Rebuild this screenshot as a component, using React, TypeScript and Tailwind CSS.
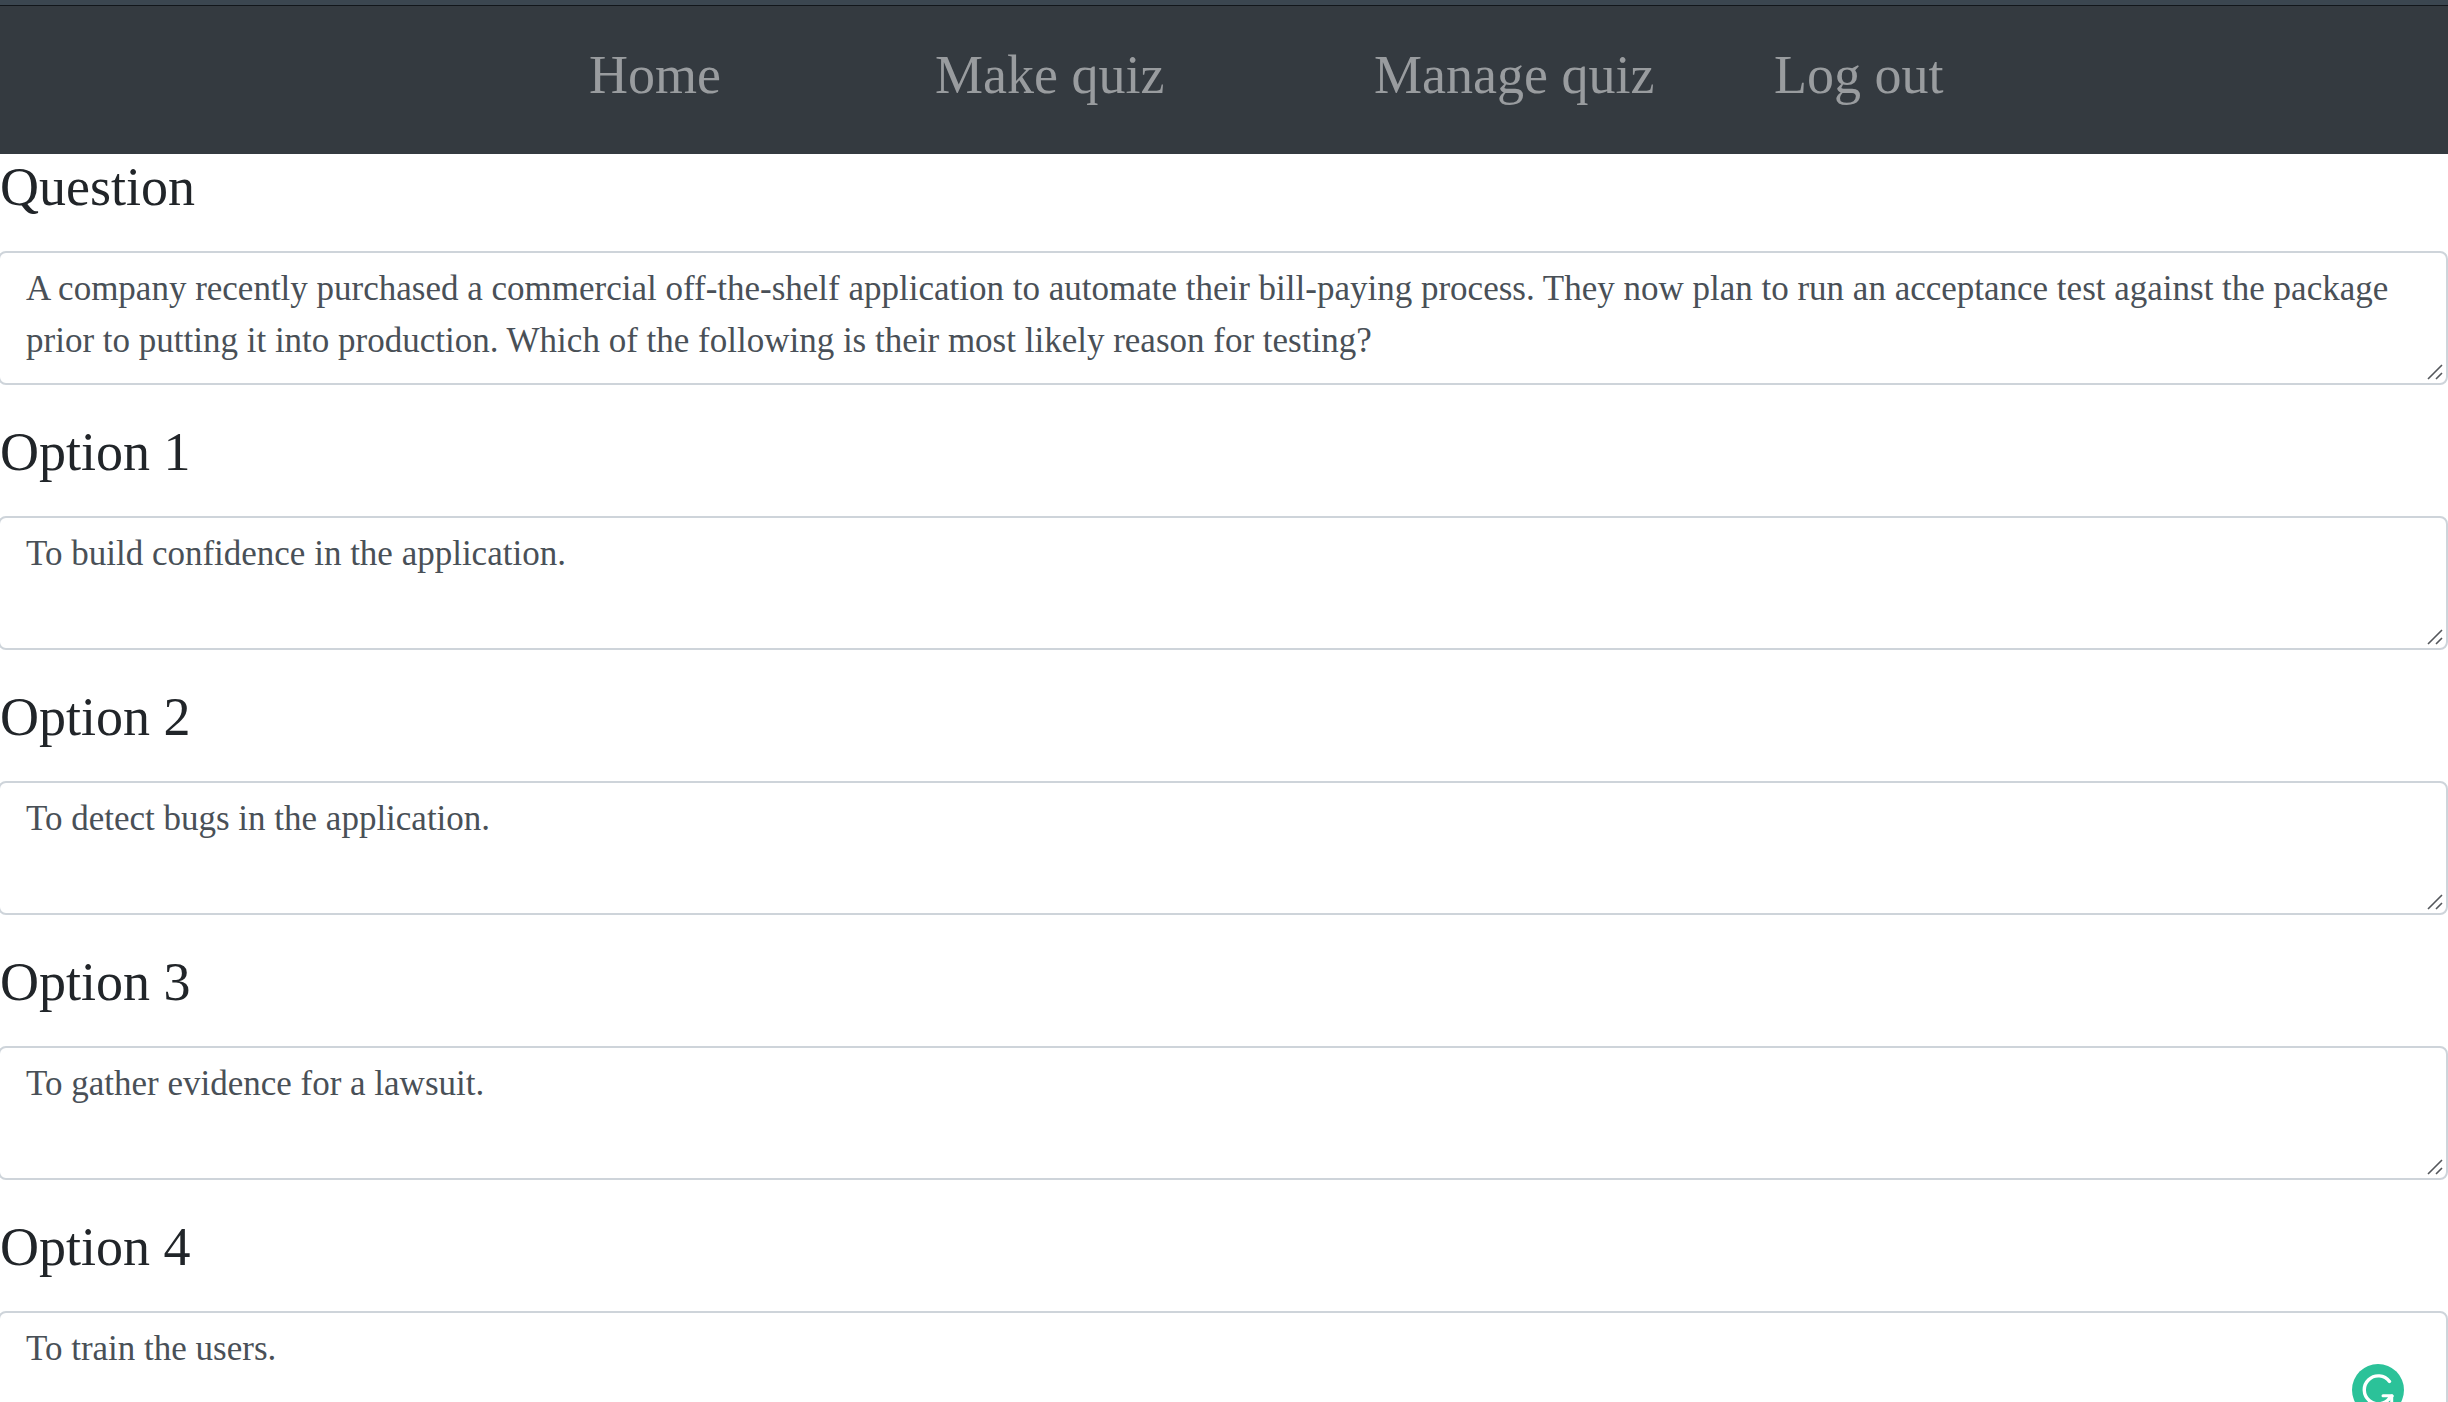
import { useState } from "react";

type Field = { id: string; label: string; value: string };

const links = ["Home", "Make quiz", "Manage quiz", "Log out"];

const fields: Field[] = [
  {
    id: "question",
    label: "Question",
    value:
      "A company recently purchased a commercial off-the-shelf application to automate their bill-paying process. They now plan to run an acceptance test against the package prior to putting it into production. Which of the following is their most likely reason for testing?",
  },
  { id: "option-1", label: "Option 1", value: "To build confidence in the application." },
  { id: "option-2", label: "Option 2", value: "To detect bugs in the application." },
  { id: "option-3", label: "Option 3", value: "To gather evidence for a lawsuit." },
  { id: "option-4", label: "Option 4", value: "To train the users." },
];

function ResizeGrip() {
  return (
    <svg
      viewBox="0 0 16 16"
      className="pointer-events-none absolute right-[5px] bottom-[5px] size-4"
      stroke="#54575b"
      strokeWidth="1.6"
      aria-hidden="true"
    >
      <path d="M1 15 15 1M9 15l6-6" />
    </svg>
  );
}

function AssistantButton() {
  return (
    <button
      type="button"
      aria-label="Writing assistant"
      className="absolute top-[53px] right-11 size-[52px] rounded-full bg-[#2bc299]"
    >
      <svg viewBox="0 0 52 52" className="size-full" fill="none" stroke="#fff" aria-hidden="true">
        <path
          d="M37.500 17.500A14 14 0 1 0 38 33.500L40 32"
          strokeWidth="3.4"
          strokeLinecap="round"
        />
        <path d="M31 31.800H39.700V41" strokeWidth="3" strokeLinecap="round" strokeLinejoin="round" />
      </svg>
    </button>
  );
}

function QuizField({ field, assisted }: { field: Field; assisted: boolean }) {
  const [value, setValue] = useState(field.value);
  return (
    <div className="flex shrink-0 flex-col gap-8">
      <label htmlFor={field.id} className="text-[54px] leading-[64px] text-[#212529]">
        {field.label}
      </label>
      <div className="relative -ml-0.5">
        <textarea
          id={field.id}
          rows={2}
          spellCheck={false}
          value={value}
          onChange={(e) => setValue(e.target.value)}
          className="block w-full resize-none overflow-hidden rounded-lg border-2 border-[#ced4da] bg-white px-[26px] pt-[10px] pb-4 text-[35px] leading-[52px] text-[#495057] outline-none"
        />
        <ResizeGrip />
        {assisted && <AssistantButton />}
      </div>
    </div>
  );
}

export default function App() {
  return (
    <div className="flex h-screen flex-col overflow-hidden bg-white font-['Liberation_Serif',serif]">
      <nav className="grid shrink-0 grid-cols-[589fr_346fr_439fr_400fr_674fr] border-t-[5px] border-[#3b4650] bg-[#343a40] text-[54px] leading-[64px] text-[#999c9f]">
        <div className="col-span-5 h-px bg-[#12161b]" />
        <span />
        {links.map((link) => (
          <a key={link} href="#" className="pt-[37px] pb-[47px] whitespace-nowrap">
            {link}
          </a>
        ))}
      </nav>
      <form className="flex flex-col gap-[35px] pt-px">
        {fields.map((field) => (
          <QuizField key={field.id} field={field} assisted={field.id === "option-4"} />
        ))}
      </form>
    </div>
  );
}
